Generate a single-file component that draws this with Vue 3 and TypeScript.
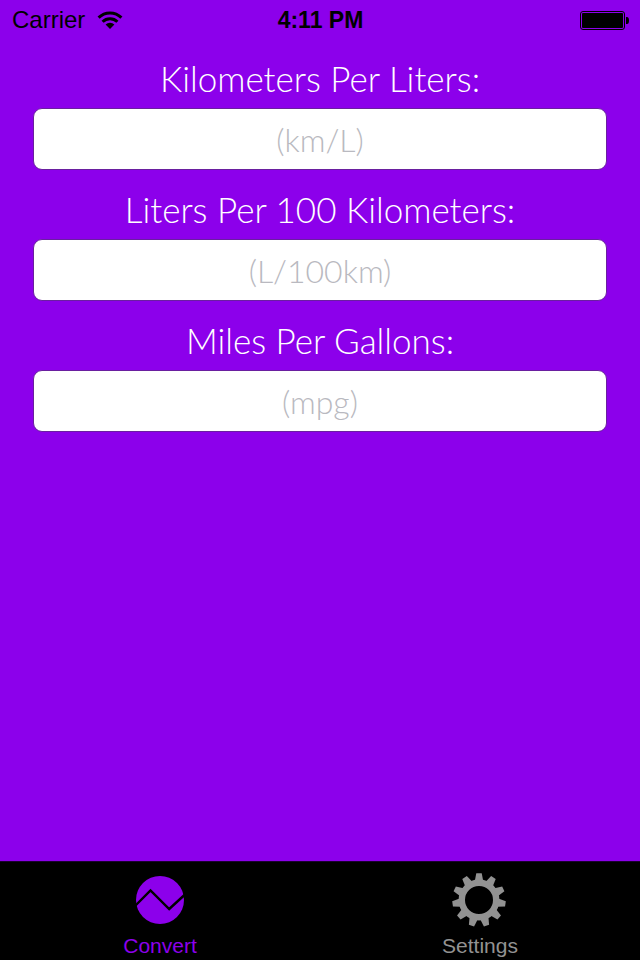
<script setup lang="ts">
import { ref } from 'vue'

interface Field {
  id: string
  label: string
  hint: string
}

const fields: Field[] = [
  { id: 'kml', label: 'Kilometers Per Liters:', hint: '(km/L)' },
  { id: 'l100', label: 'Liters Per 100 Kilometers:', hint: '(L/100km)' },
  { id: 'mpg', label: 'Miles Per Gallons:', hint: '(mpg)' },
]

const values = ref<Record<string, string>>({ kml: '', l100: '', mpg: '' })
const tab = ref<'convert' | 'settings'>('convert')
const teeth = Array.from({ length: 11 }, (_, i) => `rotate(${(i * 360) / 11} 27 28)`)
</script>

<template>
  <div class="screen">
    <header class="status">
      <div class="carrier">
        <span>Carrier</span>
        <svg width="26" height="20" viewBox="0 0 26 20" aria-hidden="true">
          <g fill="none" stroke="#000" stroke-width="3">
            <path d="M1.6 7.6A16.2 16.2 0 0 1 24.4 7.600" />
            <path d="M5.6 11.800A10.500 10.500 0 0 1 20.400 11.800" />
          </g>
          <path d="M8.600 14.600A6.200 6.200 0 0 1 17.400 14.600L13 19Z" fill="#000" />
        </svg>
      </div>
      <time class="clock">4:11 PM</time>
      <svg class="battery" width="49" height="20" viewBox="0 0 49 20" aria-hidden="true">
        <rect x="0.5" y="1.5" width="44" height="18" rx="2.500" fill="none" stroke="#000" />
        <rect x="2" y="3" width="41" height="15" rx="1" fill="#000" />
        <path d="M46 7h1q2 0 2 3.500t-2 3.500h-1z" fill="#000" />
      </svg>
    </header>

    <main class="form">
      <div v-for="f in fields" :key="f.id" class="field">
        <label :for="f.id">{{ f.label }}</label>
        <input :id="f.id" v-model="values[f.id]" type="text" inputmode="decimal" :placeholder="f.hint" />
      </div>
    </main>

    <nav class="tabs">
      <button type="button" class="tab" :class="{ active: tab === 'convert' }" @click="tab = 'convert'">
        <svg width="56" height="56" viewBox="0 0 56 56" aria-hidden="true">
          <circle cx="28" cy="28" r="24" fill="currentColor" />
          <path d="M3 34L18.500 18.500L37.200 37L53 22.500" fill="none" stroke="#000" stroke-width="2.400" />
        </svg>
        <span>Convert</span>
      </button>
      <button type="button" class="tab" :class="{ active: tab === 'settings' }" @click="tab = 'settings'">
        <svg width="56" height="56" viewBox="0 0 56 56" aria-hidden="true">
          <circle cx="27" cy="28" r="17.200" fill="none" stroke="currentColor" stroke-width="6.400" />
          <path v-for="t in teeth" :key="t" :transform="t" d="M22.800 9L24.300 1.300H29.700L31.200 9Z" fill="currentColor" />
        </svg>
        <span>Settings</span>
      </button>
    </nav>
  </div>
</template>

<style>
body {
  background: #8c00eb;
}
</style>

<style scoped>
.screen {
  min-height: 100vh;
  display: flex;
  flex-direction: column;
  background: #8c00eb;
  font-family: "Liberation Sans", Arial, sans-serif;
}

.status {
  display: grid;
  grid-template-columns: 1fr auto 1fr;
  align-items: center;
  height: 40px;
  padding: 0 11px 0 12px;
  font-size: 24px;
  color: #000;
}

.carrier {
  display: flex;
  align-items: center;
  gap: 12px;
}

.clock {
  font-size: 23px;
  font-weight: 700;
}

.battery {
  justify-self: end;
}

.form {
  flex: 1;
  display: flex;
  flex-direction: column;
  gap: 19px;
  padding: 18px 33px;
  font-family: Lato, "Open Sans", sans-serif;
  font-weight: 300;
}

.field {
  display: flex;
  flex-direction: column;
  gap: 10px;
}

label {
  font-size: 35px;
  line-height: 40px;
  text-align: center;
  color: #fff;
}

input {
  box-sizing: border-box;
  width: 100%;
  height: 62px;
  padding: 0 14px;
  border: 1px solid #6a1fa0;
  border-radius: 9px;
  background: #fff;
  font: inherit;
  font-size: 32px;
  text-align: center;
  color: #222;
  outline: none;
}

input::placeholder {
  color: #b9b9c0;
  opacity: 1;
}

.tabs {
  display: flex;
  height: 98px;
  border-top: 1px solid #1c0030;
  background: #000;
}

.tab {
  flex: 1;
  display: flex;
  flex-direction: column;
  align-items: center;
  gap: 6px;
  padding: 10px 0 0;
  border: 0;
  background: none;
  font: inherit;
  font-size: 21px;
  line-height: 24px;
  color: #929292;
  cursor: pointer;
}

.tab.active {
  color: #8c00eb;
}
</style>
